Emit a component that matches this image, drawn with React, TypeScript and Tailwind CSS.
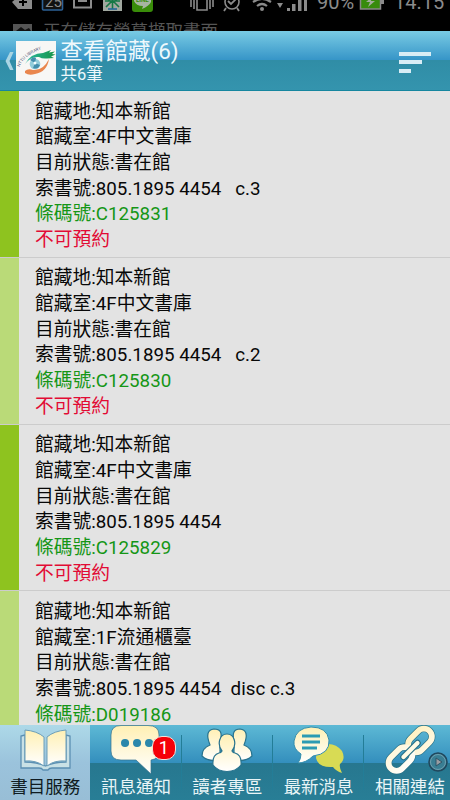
import type { ReactNode } from "react";

interface Holding {
  location: string;
  room: string;
  status: string;
  callNumber: string;
  barcode: string;
}

interface Tab {
  label: string;
  icon: ReactNode;
  active?: boolean;
  badge?: number;
}

const HOLDINGS: Holding[] = [
  { location: "知本新館", room: "4F中文書庫", status: "書在館", callNumber: "805.1895 4454   c.3", barcode: "C125831" },
  { location: "知本新館", room: "4F中文書庫", status: "書在館", callNumber: "805.1895 4454   c.2", barcode: "C125830" },
  { location: "知本新館", room: "4F中文書庫", status: "書在館", callNumber: "805.1895 4454", barcode: "C125829" },
  { location: "知本新館", room: "1F流通櫃臺", status: "書在館", callNumber: "805.1895 4454  disc c.3", barcode: "D019186" },
];

function StatusBar() {
  return (
    <div className="relative h-[31px] shrink-0 overflow-hidden bg-black text-[#8b8b8b]">
      <svg className="block" width="450" height="31" viewBox="0 0 450 31">
        <path d="M12 2 18-3H32V9H18Z" fill="#8b8b8b" />
        <path d="M23-2V6M19 2H27" stroke="#000" strokeWidth="2" />
        <rect x="42.5" y="-8" width="20" height="18" rx="1" fill="#111" stroke="#2d6196" strokeWidth="1.6" />
        <path d="M74-4V7.500H91V-4M79-2V1H86V-2" fill="none" stroke="#8b8b8b" strokeWidth="2" />
        <rect x="103" y="-8" width="19" height="19" fill="#a1a8a0" />
        <path d="M105 1H120M112.500-2V9M112 1 106 7M113 1 119 7M107-2 110 1M118-2 115 1" stroke="#167845" strokeWidth="1.600" />
        <path d="M108 9H117" stroke="#236999" strokeWidth="1.600" />
        <rect x="132" y="-9" width="21" height="21" rx="3" fill="#398c09" />
        <path d="M134-2H151V2Q149 6 142 9L143 6Q136 6 134 1Z" fill="#a7b5a1" />
        <path d="M191-2V7M194-2V9M197-4V10H207V-4M210-2V9M213-2V7" fill="none" stroke="#8b8b8b" strokeWidth="1.600" />
        <circle cx="232" cy="2" r="7" fill="none" stroke="#8b8b8b" strokeWidth="1.600" />
        <path d="M228 1 231 4 236-1M226 8 224 11M237 8 239 11" fill="none" stroke="#8b8b8b" strokeWidth="1.800" />
        <path d="M253 2Q262-4 271 2M257 6Q262 2 267 6" fill="none" stroke="#8b8b8b" strokeWidth="2.200" />
        <circle cx="262" cy="9" r="2" fill="#8b8b8b" />
        <path d="M277 3H283L280 8ZM287 8H290V11H287ZM292 4H295.500V11H292ZM298 0H301.500V11H298ZM304-4H307V11H304Z" fill="#8b8b8b" />
        <rect x="360.500" y="-8" width="20" height="17" fill="#378b0c" stroke="#898989" strokeWidth="1.500" />
        <path d="M381-3H384V4H381Z" fill="#8b8b8b" />
        <path d="M372-3 366 2H370L368 7 375 1H371Z" fill="#a2ad9b" />
        <path d="M13 24H32V31H13Z" fill="#555" />
        <path d="M16 31 21 27 25 30 29 28 31 31Z" fill="#111" />
      </svg>
      <span className="absolute left-[45px] top-[-7px] text-[15px] leading-[18px]">25</span>
      <span className="absolute left-[136px] top-[-4px] text-[6px] font-bold leading-[7px] text-[#398c09]">LINE</span>
      <span className="absolute left-[317px] top-[-10px] text-[20px] leading-[24px]">90%</span>
      <span className="absolute left-[394px] top-[-10px] text-[20px] leading-[24px]">14.15</span>
      <span className="absolute left-[43px] top-[19px] whitespace-nowrap text-[17.500px] leading-[25px] text-[#555]">正在儲存螢幕擷取畫面</span>
    </div>
  );
}

function LibraryLogo() {
  return (
    <svg className="h-10 w-10 shrink-0 bg-[#f7f7f5]" viewBox="0 0 40 40">
      <defs>
        <path id="logo-arc" d="M3.500 26Q9 13 27 8" />
        <linearGradient id="hand" x1="0" x2="1">
          <stop stopColor="#28b9a1" />
          <stop offset="1" stopColor="#179447" />
        </linearGradient>
      </defs>
      <text fontSize="4.300" fill="#596079"><textPath href="#logo-arc">NTTU LIBRARY</textPath></text>
      <path d="M9 23Q15 12 27 12L35 9 33 11.500 39 10.500 36 13 39.500 13.500 35 15.500 38 17 31 17.500Q26 18 23 16Q15 15 9 23Z" fill="url(#hand)" />
      <circle cx="19" cy="23" r="5.300" fill="#92cddb" />
      <path d="M19 22 14 19Q17 15 20 17ZM19 22 24 24Q22 29 17 27Z" fill="#438eac" />
      <circle cx="19" cy="22" r="1.500" fill="#f5ffff" />
      <path d="M9 30Q12 27 17 29Q27 30 33 18Q31 31 19 33Q13 35 9 32Z" fill="#e9864d" />
    </svg>
  );
}

function Header() {
  return (
    <header className="flex h-[60px] shrink-0 items-center border-b border-[#16869f] bg-[linear-gradient(#79cbe4_0%,#3594c7_50%,#308da6_50%,#3494ae_100%)] text-[#edf8fc]">
      <svg className="ml-[5px] h-5 w-[9px] shrink-0" viewBox="0 0 9 20">
        <path d="M5 1H8.500L4.500 10 8.500 19H5L.500 10Z" fill="#a9d5e3" />
      </svg>
      <div className="ml-[1.500px]"><LibraryLogo /></div>
      <div className="ml-[5px] flex flex-col pt-[2px]">
        <h1 className="whitespace-nowrap text-[22.500px] leading-[27px]">查看館藏(6)</h1>
        <p className="text-[16.500px] leading-[20px]">共6筆</p>
      </div>
      <div className="ml-auto mr-[19px] mt-[3px] flex w-8 flex-col gap-[4.500px]">
        <span className="h-[4px] w-8 bg-[#d8edf5]" />
        <span className="h-[4px] w-[23px] bg-[#d8edf5]" />
        <span className="h-[4px] w-3 bg-[#d8edf5]" />
      </div>
    </header>
  );
}

function HoldingRow({ holding, light }: { holding: Holding; light: boolean }) {
  return (
    <li className="flex h-[166.800px] shrink-0 border-b border-[#cccccc]">
      <div className={light ? "w-[19px] shrink-0 bg-[#bada78]" : "w-[19px] shrink-0 bg-[#8ec31f]"} />
      <div className="whitespace-pre pl-4 pt-[8.500px] text-[18.750px] leading-[25.700px] text-[#080808]">
        <p>館藏地:{holding.location}</p>
        <p>館藏室:{holding.room}</p>
        <p>目前狀態:{holding.status}</p>
        <p>索書號:{holding.callNumber}</p>
        <p className="text-[#159616]">條碼號:{holding.barcode}</p>
        <p className="text-[#e20b35]">不可預約</p>
      </div>
    </li>
  );
}

function BookIcon() {
  return (
    <svg className="h-[50px] w-[58px]" viewBox="0 0 58 50">
      <path d="M9 10 5 11V43H23Q26 43 27 45H32Q33 43 36 43H54V11L50 10V37Q38 37 29.500 41Q21 37 9 37Z" fill="#c9e1e6" stroke="#5b8fb2" strokeWidth="1.300" />
      <path d="M9 5Q21 6 28 12V41Q20 35 9 36ZM50 5Q38 6 31 12V41Q38 35 50 36Z" fill="url(#cream)" stroke="#6d9eb8" />
    </svg>
  );
}

function MessageIcon() {
  return (
    <svg className="h-[50px] w-[58px]" viewBox="0 0 58 50">
      <path d="M14 .5H41Q52 .5 52 10V26Q52 34 44 35V49L29 35H14Q4 35 4 26V10Q4 .5 14 .5Z" fill="url(#cream)" stroke="#35718d" strokeWidth=".7" />
      <path d="M18 18H18.100M30 18H30.100M42 18H42.100" stroke="#2b87ab" strokeWidth="8" strokeLinecap="round" />
    </svg>
  );
}

function ReadersIcon() {
  return (
    <svg className="h-[50px] w-[58px]" viewBox="0 0 58 50" fill="url(#cream)" stroke="#28738e" strokeWidth="1.200">
      <path d="M12 20Q6 5 16 4Q26 4 22 16L22 35Q10 37 4 31Q4 23 12 20Z" />
      <path d="M46 20Q52 5 42 4Q33 4 36 16L36 35Q48 37 54 31Q54 23 46 20Z" />
      <path d="M24 26C19 20 21 9 29 9S39 20 34 26Q35 28 37 28Q44 30 43 40Q38 46.500 29 46.500Q20 46.500 15 40Q14 30 21 28Q23 28 24 26Z" />
    </svg>
  );
}

function NewsIcon() {
  return (
    <svg className="h-[50px] w-[58px]" viewBox="0 0 58 50">
      <path d="M36 19Q46 18 52 26Q56 34 50 39Q49 42 52 48Q46 46 43 42Q28 43 26 33Q26 21 36 19Z" fill="#d8db54" />
      <path d="M21 2Q37 2 39 15Q40 29 23 31Q16 38 8 38Q11 34 11 29Q3 24 4 16Q6 3 21 2Z" fill="url(#cream)" stroke="#338ead" strokeWidth="1" />
      <path d="M12 11H30M12 17H30M12 23H27" stroke="#2c9bb3" strokeWidth="2.800" />
    </svg>
  );
}

function LinksIcon() {
  return (
    <svg className="h-[50px] w-[58px]" viewBox="0 0 58 50" fill="none">
      <g stroke="#276f84" strokeWidth="7">
        <rect x="25.500" y="7.500" width="27" height="16" rx="8" transform="rotate(-45 39 15.500)" />
        <rect x="6" y="26" width="27" height="16" rx="8" transform="rotate(-45 19.500 34)" />
      </g>
      <g stroke="url(#cream-space)" strokeWidth="5.800">
        <rect x="25.500" y="7.500" width="27" height="16" rx="8" transform="rotate(-45 39 15.500)" />
        <rect x="6" y="26" width="27" height="16" rx="8" transform="rotate(-45 19.500 34)" />
      </g>
      <path d="M22.500 32 36.500 18" stroke="#276f84" strokeWidth="6.500" strokeLinecap="round" />
      <path d="M22.500 32 36.500 18" stroke="#fffbe5" strokeWidth="4.300" strokeLinecap="round" />
    </svg>
  );
}

const TABS: Tab[] = [
  { label: "書目服務", icon: <BookIcon />, active: true },
  { label: "訊息通知", icon: <MessageIcon />, badge: 1 },
  { label: "讀者專區", icon: <ReadersIcon /> },
  { label: "最新消息", icon: <NewsIcon /> },
  { label: "相關連結", icon: <LinksIcon /> },
];

function BottomNav() {
  return (
    <nav className="relative flex h-[75px] shrink-0 overflow-hidden bg-[linear-gradient(#5db9d5_0%,#348fbd_50%,#27778f_50%,#287e96_100%)]">
      {TABS.map((tab) => (
        <button
          key={tab.label}
          className={`relative flex h-full shrink-0 flex-col items-center ${
            tab.active
              ? "w-[90.400px] bg-[linear-gradient(#add9e8,#9bc3dc_50%,#98bed6)] text-[#101c22]"
              : "w-[91.300px] text-[#e9f5f7]"
          }`}
        >
          {tab.icon}
          <span className="whitespace-nowrap text-[17.500px] leading-[25px]">{tab.label}</span>
          {!tab.active && <span className="absolute right-0 top-[10px] h-[55px] w-px bg-[#237d97]" />}
          {tab.badge && (
            <span className="absolute left-[61.500px] top-[10.500px] flex h-[24px] w-[24px] items-center justify-center rounded-[10px] border border-[#efe5dc] bg-[#f60008] text-[18px] leading-none text-white">
              {tab.badge}
            </span>
          )}
        </button>
      ))}
      <svg className="absolute right-[2px] top-[27px] h-5 w-5" viewBox="0 0 20 20">
        <circle cx="10" cy="10" r="9" fill="#397e93" stroke="#21485d" strokeWidth="1.500" />
        <circle cx="10" cy="10" r="7.500" fill="none" stroke="#6d9eae" />
        <path d="M8 6 14 10 8 14Z" fill="#999ca1" stroke="#2d5568" />
      </svg>
    </nav>
  );
}

export default function App() {
  return (
    <div className="flex h-[800px] w-[450px] flex-col overflow-hidden bg-[#e3e3e3] font-[Roboto,'Noto_Sans_CJK_TC',sans-serif]">
      <svg className="absolute h-0 w-0">
        <defs>
          <linearGradient id="cream" x2="0" y2="1">
            <stop stopColor="#fff0b4" />
            <stop offset="1" stopColor="#ffffff" />
          </linearGradient>
          <linearGradient id="cream-space" gradientUnits="userSpaceOnUse" x1="0" y1="0" x2="0" y2="50">
            <stop stopColor="#fff0bd" />
            <stop offset="1" stopColor="#ffffff" />
          </linearGradient>
        </defs>
      </svg>
      <StatusBar />
      <Header />
      <ul className="flex min-h-0 flex-1 flex-col overflow-hidden">
        {HOLDINGS.map((holding, i) => (
          <HoldingRow key={holding.barcode} holding={holding} light={i % 2 === 1} />
        ))}
      </ul>
      <BottomNav />
    </div>
  );
}
